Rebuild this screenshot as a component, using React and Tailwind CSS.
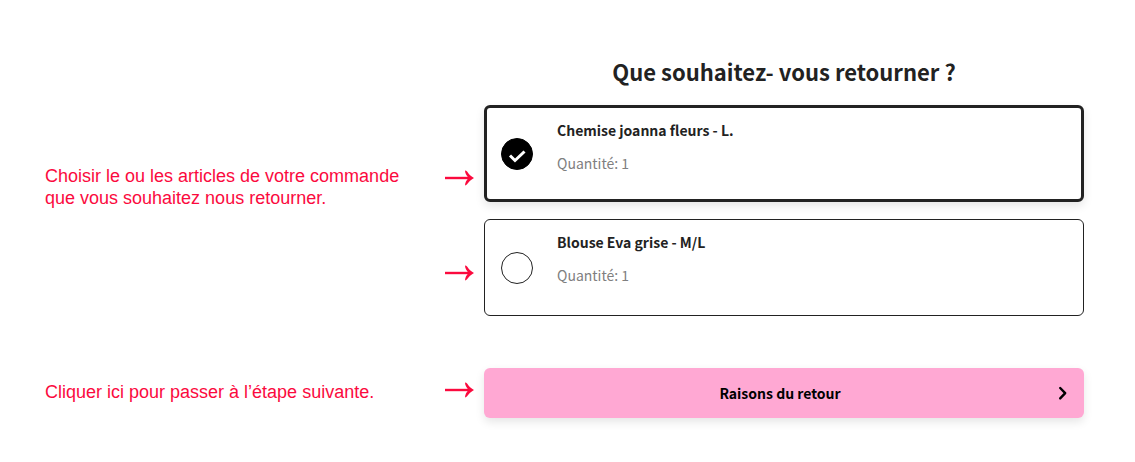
import { useState } from 'react';

const ITEMS = [
  { id: 'chemise', name: 'Chemise joanna fleurs - L.', quantity: 1 },
  { id: 'blouse', name: 'Blouse Eva grise - M/L', quantity: 1 },
];

function Arrow() {
  return (
    <svg viewBox="0 0 30 16" className="w-[30px] h-4 shrink-0" aria-hidden="true">
      <path d="M0 6.8h25v2.4H0z" fill="#fb0a3e" />
      <path
        d="M20 .6c1.8 0 2.5 1.600 3.700 3.100 1.400 1.800 3.200 3 5.300 4.300-2.100 1.300-3.900 2.500-5.300 4.300-1.200 1.500-1.900 3.100-3.700 3.100.1-2.600 1.300-5 3.600-7.400C21.300 5.600 20.100 3.200 20 .6z"
        fill="#fb0a3e"
      />
    </svg>
  );
}

function Row({ hint, hintClass = '', arrowClass, children }) {
  return (
    <div className="flex items-start">
      <p className={`w-[400px] shrink text-lg leading-[22px] text-[#fb0a3e] ${hintClass}`}>{hint}</p>
      <div className={`w-[39px] shrink-0 ${arrowClass}`}>
        <Arrow />
      </div>
      <div className="flex-1 min-w-0">{children}</div>
    </div>
  );
}

function ReturnItem({ item, checked, onToggle }) {
  return (
    <label
      className={`flex items-center gap-6 min-h-[97px] rounded-md bg-white cursor-pointer font-['Noto_Sans_CJK_JP',sans-serif] ${
        checked
          ? 'border-3 border-[#222222] px-[14px] shadow-[0_4px_10px_rgba(0,0,0,0.1)]'
          : 'border border-[#222222] px-4'
      }`}
    >
      <span className="relative size-8 shrink-0">
        <input
          type="checkbox"
          checked={checked}
          onChange={onToggle}
          className="block size-8 appearance-none rounded-full border border-[#222222] checked:border-black checked:bg-black"
        />
        {checked && (
          <svg viewBox="0 0 32 32" className="absolute inset-0 pointer-events-none" aria-hidden="true">
            <path d="M9 17.5l5 5 9.500-9" fill="none" stroke="#fff" strokeWidth="3" />
          </svg>
        )}
      </span>
      <span className="flex flex-col gap-[9px] self-start pt-[10px]">
        <span className="text-sm leading-6 font-bold text-[#222222]">{item.name}</span>
        <span className="text-sm leading-6 text-[#808080]">Quantité: {item.quantity}</span>
      </span>
    </label>
  );
}

export default function App() {
  const [selected, setSelected] = useState(['chemise']);

  const toggle = (id) =>
    setSelected((prev) => (prev.includes(id) ? prev.filter((x) => x !== id) : [...prev, id]));

  return (
    <main className="bg-white pl-[45px] pr-[51px] pt-[55px] pb-11 font-['Liberation_Sans',Arial,sans-serif]">
      <h1 className="ml-[439px] mb-[17px] text-center text-[22px] leading-[33px] font-bold text-[#222222] font-['Noto_Sans_CJK_JP',sans-serif]">
        Que souhaitez- vous retourner ?
      </h1>

      <div className="flex flex-col gap-[10px]">
        <Row
          hint={
            <>
              Choisir le ou les articles de votre commande
              <br />
              que vous souhaitez nous retourner.
            </>
          }
          hintClass="pt-[60px]"
          arrowClass="pt-[65px]"
        >
          <ReturnItem
            item={ITEMS[0]}
            checked={selected.includes(ITEMS[0].id)}
            onToggle={() => toggle(ITEMS[0].id)}
          />
        </Row>
        <Row arrowClass="pt-[46px]">
          <ReturnItem
            item={ITEMS[1]}
            checked={selected.includes(ITEMS[1].id)}
            onToggle={() => toggle(ITEMS[1].id)}
          />
        </Row>
      </div>

      <div className="mt-[52px]">
        <Row hint="Cliquer ici pour passer à l’étape suivante." hintClass="pt-[13px]" arrowClass="pt-[14px]">
          <button
            type="button"
            className="relative flex w-full items-center justify-center rounded-md bg-[#ffa8d3] py-[13px] text-sm leading-6 font-bold text-black shadow-[0_4px_10px_rgba(0,0,0,0.1)] cursor-pointer font-['Noto_Sans_CJK_JP',sans-serif]"
          >
            <span className="pr-2">Raisons du retour</span>
            <svg viewBox="0 0 10 16" className="absolute right-4 w-[10px] h-4" aria-hidden="true">
              <path
                d="M2.2 3l5 5.200-5 5.200"
                fill="none"
                stroke="#000"
                strokeWidth="2.4"
                strokeLinecap="round"
                strokeLinejoin="round"
              />
            </svg>
          </button>
        </Row>
      </div>
    </main>
  );
}
